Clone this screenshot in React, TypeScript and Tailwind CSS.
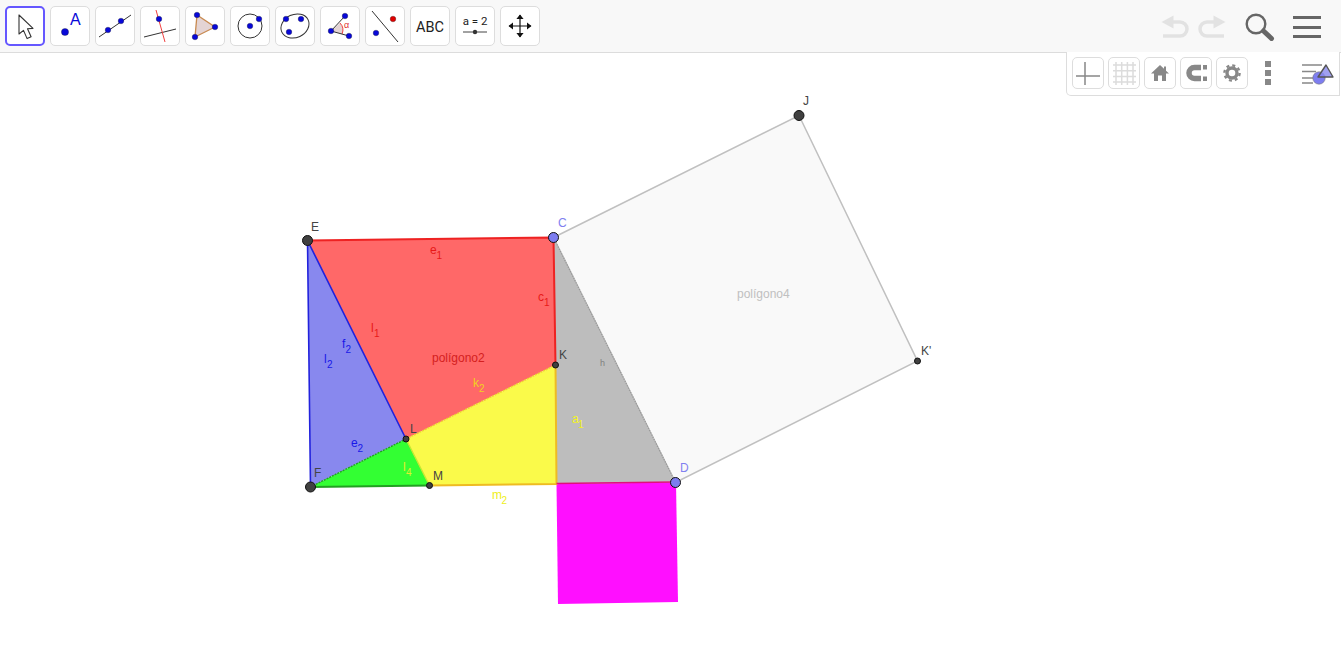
import React from 'react'

const BLUE = '#0808d8'

function Dot({ x, y, r = 2.8, c = BLUE }: { x: number; y: number; r?: number; c?: string }) {
  return <circle cx={x} cy={y} r={r} fill={c} stroke="#111" strokeWidth={0.3} />
}

const tools: React.ReactNode[] = [
  <path d="M14 9v19l4.5-3.6 3.6 8.2 4-1.8-3.6-8 5.5-.4z" fill="#fff" stroke="#333" strokeWidth={1.1} strokeLinejoin="round" />,
  <>
    <text x={20} y={19} fontSize={16} fill={BLUE}>A</text>
    <Dot x={15} y={26} r={3.6} />
  </>,
  <>
    <line x1={4} y1={31} x2={36} y2={9} stroke="#333" />
    <Dot x={13} y={24} />
    <Dot x={26} y={15} />
  </>,
  <>
    <line x1={4} y1={31} x2={36} y2={23} stroke="#333" />
    <line x1={16} y1={4} x2={25} y2={36} stroke="#f04040" />
    <Dot x={19} y={13} />
  </>,
  <>
    <polygon points="12,9 30,21 10,31" fill="#e4d4d4" stroke="#c88a50" strokeWidth={1.3} />
    <Dot x={12} y={9} />
    <Dot x={30} y={21} />
    <Dot x={10} y={31} />
  </>,
  <>
    <circle cx={20} cy={20} r={12} fill="none" stroke="#333" />
    <Dot x={20} y={20} />
    <Dot x={29} y={13} />
  </>,
  <>
    <ellipse cx={20} cy={20} rx={14.5} ry={11.5} transform="rotate(-25 20 20)" fill="none" stroke="#333" />
    <Dot x={11} y={13} />
    <Dot x={26} y={13} />
    <Dot x={14} y={26} />
  </>,
  <>
    <path d="M11 25L20 17A10 10 0 0 1 22 28z" fill="#e4d4d4" />
    <path d="M20 17A10 10 0 0 1 22 28" fill="none" stroke="#f04040" />
    <path d="M25 10L11 25L29 30" fill="none" stroke="#333" />
    <text x={24} y={22} fontSize={9} fill="#e03030">α</text>
    <Dot x={11} y={25} />
    <Dot x={25} y={10} />
    <Dot x={29} y={30} />
  </>,
  <>
    <line x1={7} y1={5} x2={33} y2={36} stroke="#333" />
    <Dot x={28} y={13} c="#e00000" />
    <Dot x={11} y={27} />
  </>,
  <text x={20} y={25.5} fontSize={14.5} fill="#222" textAnchor="middle" fontFamily="Roboto, sans-serif">ABC</text>,
  <>
    <text x={20} y={19} fontSize={11.5} fill="#222" textAnchor="middle" fontFamily="Roboto, sans-serif">a = 2</text>
    <line x1={8} y1={26} x2={32} y2={26} stroke="#444" />
    <circle cx={20} cy={26} r={2.2} fill="#333" />
  </>,
  <>
    <path d="M9 20H31M20 9V31" stroke="#111" strokeWidth={1.2} />
    <path d="M20 8.5l-3.6 4.5h7.2zM20 31.5l-3.6-4.5h7.2zM8.5 20l4.5-3.6v7.2zM31.5 20l-4.5-3.6v7.2z" fill="#111" />
  </>,
]

const styleTools: React.ReactNode[] = [
  <path d="M4 19H28M13 5V28" stroke="#888" strokeWidth={1.5} />,
  <path d="M5 8H28M5 13.7H28M5 19.4H28M5 25H28M8 5V28M13.7 5V28M19.4 5V28M25 5V28" stroke="#dcdcdc" strokeWidth={1.5} />,
  <path d="M16 8L7 16.5H10V24H14V18.5H18V24H22V16.5H25L22 13.7V9.5H20V11.8z" fill="#888" />,
  <>
    <path d="M21 10.5H14.5A5.5 5.5 0 0 0 14.5 21.5H21" fill="none" stroke="#888" strokeWidth={5.5} />
    <rect x={23} y={8} width={4} height={4.5} fill="#888" />
    <rect x={23} y={19.5} width={4} height={4.5} fill="#888" />
  </>,
  <>
    <circle cx={16} cy={16} r={5} fill="none" stroke="#888" strokeWidth={3.4} />
    <circle cx={16} cy={16} r={7.6} fill="none" stroke="#888" strokeWidth={2.4} strokeDasharray="3 2.97" />
  </>,
]

const labels: { x: number; y: number; t: string; s?: string; c: string; dx?: number; z?: number }[] = [
  { x: 311, y: 231, t: 'E', c: '#444' },
  { x: 558, y: 227, t: 'C', c: '#8080f0' },
  { x: 559, y: 359, t: 'K', c: '#444' },
  { x: 410, y: 433, t: 'L', c: '#444' },
  { x: 314, y: 477, t: 'F', c: '#444' },
  { x: 433, y: 480, t: 'M', c: '#444' },
  { x: 680, y: 472, t: 'D', c: '#8080f0' },
  { x: 803, y: 105, t: 'J', c: '#444' },
  { x: 921, y: 355, t: "K'", c: '#444' },
  { x: 432, y: 362, t: 'polígono2', c: '#d42020' },
  { x: 737, y: 298, t: 'polígono4', c: '#c0c0c0' },
  { x: 430, y: 254, t: 'e', s: '1', c: '#e81818', dx: 6.5 },
  { x: 538, y: 301, t: 'c', s: '1', c: '#e81818', dx: 6 },
  { x: 371, y: 332, t: 'l', s: '1', c: '#e81818', dx: 3 },
  { x: 342, y: 348, t: 'f', s: '2', c: '#1818e8', dx: 3.5 },
  { x: 324, y: 363, t: 'l', s: '2', c: '#1818e8', dx: 3 },
  { x: 351, y: 447, t: 'e', s: '2', c: '#1818e8', dx: 6.5 },
  { x: 473, y: 387, t: 'k', s: '2', c: '#f2d020', dx: 6 },
  { x: 403, y: 471, t: 'l', s: '4', c: '#e2ee30', dx: 3 },
  { x: 492, y: 499, t: 'm', s: '2', c: '#eeee20', dx: 9.5 },
  { x: 572, y: 423, t: 'a', s: '1', c: '#f4f420', dx: 6 },
  { x: 600, y: 366, t: 'h', c: '#808080', z: 9 },
]

function Figure() {
  return (
    <svg viewBox="0 53 1341 597" className="block h-[597px] w-[1341px]" fontFamily="'Liberation Sans', sans-serif">
      <polygon points="553.5,237.5 799,115.5 917.5,361 675.5,482.5" fill="#f9f9f9" stroke="#c0c0c0" strokeWidth={1.5} />
      <polygon points="556.5,483.5 676,482 678,602 558,604" fill="#ff0fff" />
      <polygon points="553.5,237.5 675.5,482.5 556.5,484" fill="#bdbdbd" />
      <line x1={553.5} y1={237.5} x2={675.5} y2={482.5} stroke="#999" strokeWidth={1.2} strokeDasharray="1.5 1" />
      <polygon points="307.5,240.5 553.5,237.5 555.5,365 406,439" fill="#ff6868" />
      <polygon points="307.5,240.5 406,439 310.5,487" fill="#8888ee" />
      <polygon points="406,439 555.5,365 556.5,484 429.5,485.5" fill="#fafa4a" />
      <polygon points="310.5,487 406,439 429.5,485.5" fill="#33ff33" />

      <path d="M307.5 240.5L553.5 237.5L555.5 365" fill="none" stroke="#ee2222" strokeWidth={2} />
      <path d="M406 439L307.5 240.5L310.5 487" fill="none" stroke="#2222dd" strokeWidth={1.6} />
      <path d="M310.5 487L406 439" stroke="#22a022" strokeWidth={1.4} strokeDasharray="2 1" />
      <path d="M310.5 487L429.5 485.5" stroke="#22a022" strokeWidth={2} />
      <path d="M429.5 485.5L556.5 484L555.5 365" fill="none" stroke="#eebb22" strokeWidth={2} />
      <path d="M406 439L555.5 365" stroke="#f0d030" strokeWidth={1.4} strokeDasharray="2 1" />
      <path d="M406 439L429.5 485.5" stroke="#c8e830" strokeWidth={1.4} />
      <path d="M556.5 483.5L676 482" stroke="#e0107a" strokeWidth={1.4} />

      {labels.map(l => (
        <g key={l.t + (l.s || '') + l.x} fill={l.c} fontSize={l.z || 12}>
          <text x={l.x} y={l.y}>{l.t}</text>
          {l.s && <text x={l.x + (l.dx || 0)} y={l.y + 5} fontSize={10}>{l.s}</text>}
        </g>
      ))}

      {[[307.5, 240.5], [310.5, 487], [799, 115.5]].map(([x, y]) => (
        <circle key={x} cx={x} cy={y} r={5} fill="#404040" stroke="#111" />
      ))}
      {[[553.5, 237.5], [675.5, 482.5]].map(([x, y]) => (
        <circle key={x} cx={x} cy={y} r={5} fill="#7d7df0" stroke="#111" />
      ))}
      {[[555.5, 365], [406, 439], [429.5, 485.5], [917.5, 361]].map(([x, y]) => (
        <circle key={x} cx={x} cy={y} r={3} fill="#404040" stroke="#111" />
      ))}
    </svg>
  )
}

export default function App() {
  return (
    <div className="relative h-[650px] w-[1341px] overflow-hidden bg-white font-['Liberation_Sans',sans-serif]">
      <div className="flex h-[53px] items-start justify-between border-b border-[#dcdcdc] bg-[#f8f8f8]">
        <div className="flex gap-[5px] pl-[5px] pt-[6px]">
          {tools.map((icon, i) => (
            <div
              key={i}
              className={
                i === 0
                  ? 'flex h-10 w-10 items-center justify-center rounded-[5px] border-2 border-[#6557ff] bg-white'
                  : 'flex h-10 w-10 items-center justify-center rounded-[5px] border border-[#dddddd] bg-white'
              }
            >
              <svg viewBox="0 0 40 40" className="h-10 w-10 shrink-0" fontFamily="'Liberation Sans', sans-serif">
                {icon}
              </svg>
            </div>
          ))}
        </div>
        <div className="flex items-center gap-[9px] pr-[20px] pt-[13px]">
          <svg viewBox="0 0 28 26" className="h-[26px] w-7">
            <path d="M8 8H19a7 7 0 0 1 0 14H2" fill="none" stroke="#e2e2e2" strokeWidth={3.5} />
            <path d="M0.5 8L12.5 1.5V14.5z" fill="#e2e2e2" />
          </svg>
          <svg viewBox="0 0 28 26" className="h-[26px] w-7">
            <path d="M20 8H9a7 7 0 0 0 0 14H26" fill="none" stroke="#e2e2e2" strokeWidth={3.5} />
            <path d="M27.5 8L15.5 1.5V14.5z" fill="#e2e2e2" />
          </svg>
          <svg viewBox="0 0 30 28" className="ml-[10px] h-7 w-[30px]">
            <circle cx={11} cy={11} r={9.3} fill="none" stroke="#666" strokeWidth={2.4} />
            <path d="M18.5 18L26.5 25.5" stroke="#666" strokeWidth={5} strokeLinecap="round" />
          </svg>
          <div className="ml-[9px] flex w-7 flex-col gap-[6.5px]">
            <div className="h-[3px] bg-[#666]" />
            <div className="h-[3px] bg-[#666]" />
            <div className="h-[3px] bg-[#666]" />
          </div>
        </div>
      </div>

      <Figure />

      <div className="absolute right-[1px] top-[52px] flex h-[44px] w-[274px] items-start gap-1 rounded-bl-[5px] border border-t-0 border-[#dddddd] bg-white pl-[5px] pt-[5px]">
        {styleTools.map((icon, i) => (
          <div key={i} className="flex h-8 w-8 items-center justify-center rounded-[5px] border border-[#dddddd]">
            <svg viewBox="0 0 32 32" className="h-8 w-8 shrink-0">{icon}</svg>
          </div>
        ))}
        <div className="ml-[13px] flex w-[6px] flex-col gap-[3px] pt-[4px]">
          <div className="h-[6px] bg-[#888]" />
          <div className="h-[6px] bg-[#888]" />
          <div className="h-[6px] bg-[#888]" />
        </div>
        <svg viewBox="0 0 34 28" className="ml-[27px] mt-[5px] h-7 w-[34px]">
          <path d="M0 3H20M0 9.5H14M0 16H11M0 21H11" stroke="#888" strokeWidth={1.6} />
          <circle cx={17} cy={16} r={6.2} fill="#7d7df0" stroke="#777" strokeWidth={0.6} />
          <polygon points="24,3 31,15 16,15" fill="#8888ee" fillOpacity={0.8} stroke="#555" strokeWidth={1.4} strokeLinejoin="round" />
        </svg>
      </div>
    </div>
  )
}
